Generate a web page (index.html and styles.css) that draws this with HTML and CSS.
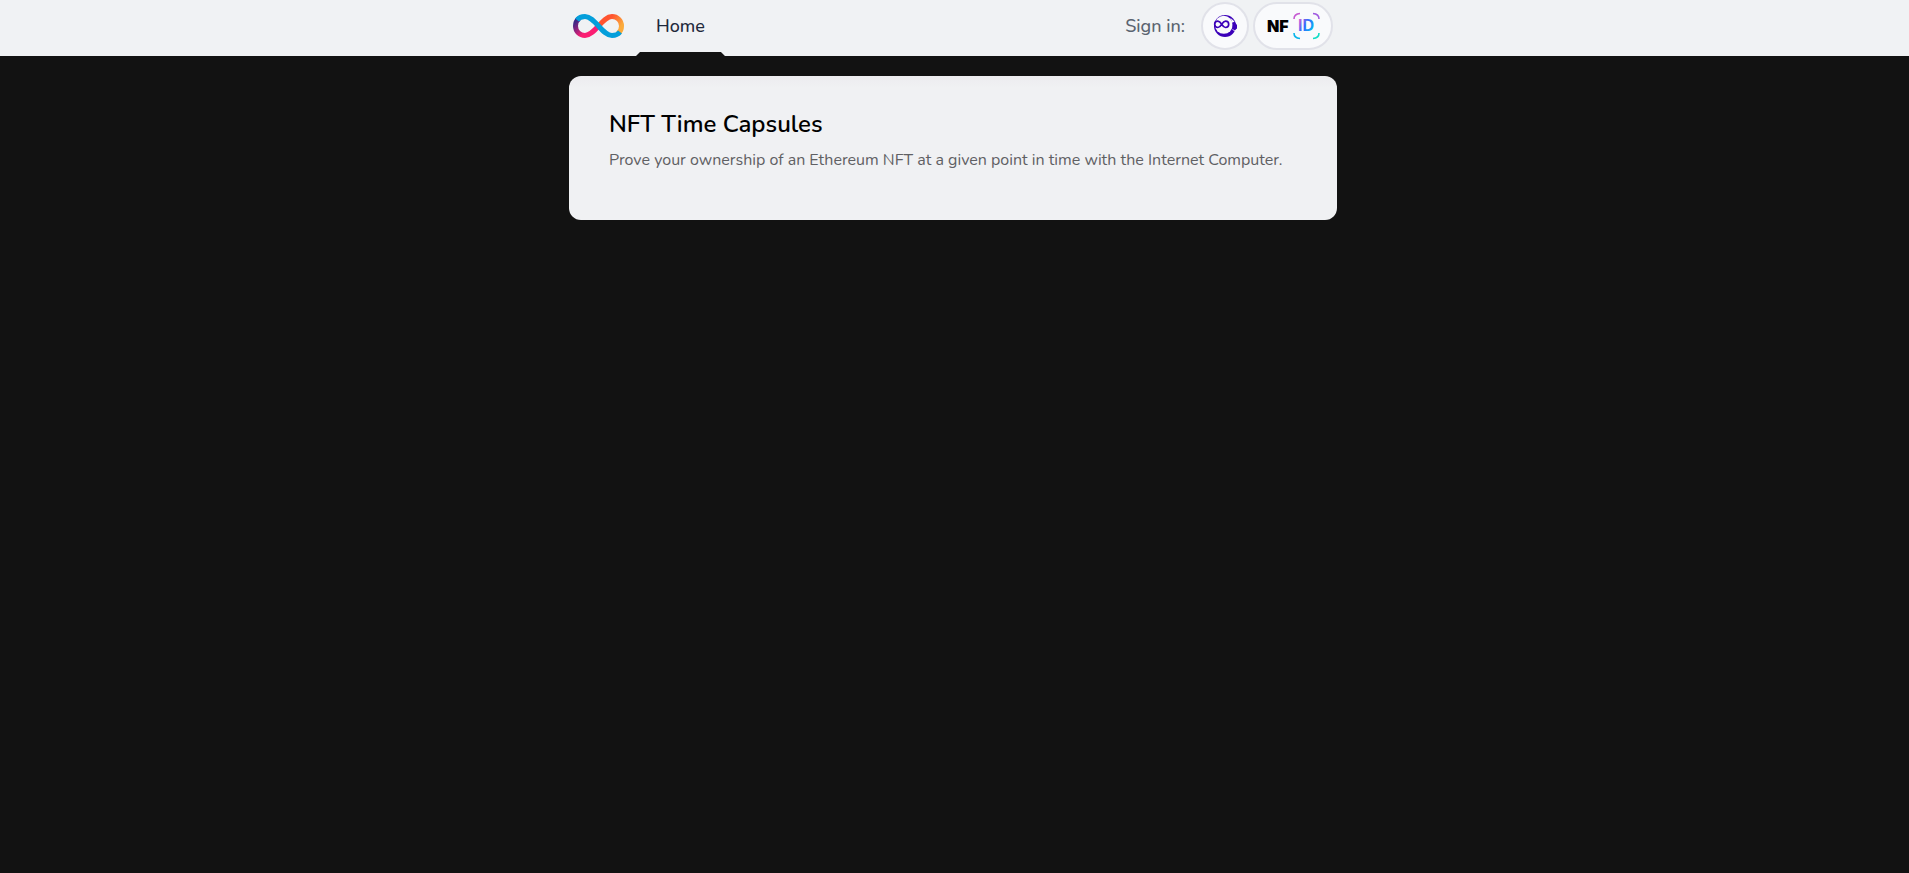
FILE: index.html
```html
<!DOCTYPE html>
<html lang="en">
<head>
<meta charset="utf-8">
<meta name="viewport" content="width=device-width, initial-scale=1">
<title>NFT Time Capsules</title>
<link rel="stylesheet" href="styles.css">
</head>
<body>
<header class="topbar">
  <div class="container topbar-inner">
    <nav class="nav">
      <svg class="logo" viewBox="0 0 51 24" fill="none" stroke-width="5" aria-hidden="true">
        <defs>
          <linearGradient id="warm" x1="29" y1="3" x2="48" y2="18" gradientUnits="userSpaceOnUse">
            <stop offset="0.3" stop-color="#ff5430"/><stop offset="0.85" stop-color="#fbab3b"/>
          </linearGradient>
          <linearGradient id="pink" x1="18" y1="21" x2="3" y2="6" gradientUnits="userSpaceOnUse">
            <stop offset="0.3" stop-color="#fb1e72"/><stop offset="0.95" stop-color="#3f2785"/>
          </linearGradient>
        </defs>
        <path stroke="url(#warm)" d="M25 12.5C30 7 34 2.5 39 2.5C44.300 2.500 48.500 6.700 48.500 12C48.500 15 47 18 45 19.500"/>
        <path stroke="url(#pink)" d="M26 11.500C21 17 17 21.500 12 21.500C6.700 21.500 2.500 17.300 2.500 12C2.500 9 4 6 6 4.500"/>
        <path stroke="#049fdb" d="M4 6C6 3.500 9 2.500 12 2.500C22 2.500 29 21.500 39 21.500C42 21.500 45 20.500 47 18"/>
      </svg>
      <a class="tab" href="#">Home</a>
    </nav>
    <div class="signin">
      <span class="signin-label">Sign in:</span>
      <button class="provider" type="button" aria-label="Internet Identity">
        <svg class="astronaut" viewBox="0 0 24 24" aria-hidden="true">
          <circle cx="12" cy="12" r="11" fill="#3b00b9"/>
          <circle cx="10.800" cy="10.800" r="9" fill="#fafafc"/>
          <path fill="#fafafc" d="M17.500 4l4 3.500-2 1.500z"/>
          <path fill="#3b00b9" d="M19.500 8.500h2.500l2 2.500v3.500l-2 1.500h-2.500z"/>
          <path fill="none" stroke="#fafafc" stroke-width="0.800" d="M19.500 15.500l3 1.800"/>
          <path fill="none" stroke="#3b00b9" stroke-width="1.700" d="M8.700 10.300C7.500 8.300 6.300 7.100 4.900 7.100a3.200 3.200 0 0 0 0 6.400C6.300 13.500 7.500 12.300 8.700 10.300C9.900 8.300 11.100 7.100 12.500 7.100a3.200 3.200 0 0 1 0 6.400C11.100 13.500 9.900 12.300 8.700 10.300z"/>
        </svg>
      </button>
      <button class="provider provider-wide" type="button" aria-label="NFID">
        <svg class="nfid" viewBox="0 0 54 28" aria-hidden="true">
          <defs>
            <linearGradient id="id" x1="32" y1="9" x2="48" y2="19" gradientUnits="userSpaceOnUse">
              <stop offset="0" stop-color="#d45bd4"/><stop offset="0.450" stop-color="#2f6bff"/><stop offset="1" stop-color="#00c8ee"/>
            </linearGradient>
          </defs>
          <text class="nf" x="1" y="20">NF</text>
          <text class="id" x="32" y="19" fill="url(#id)">ID</text>
          <g fill="none" stroke-width="1.600">
            <path stroke="#c65ad2" d="M28 7q0-5 6-5.500"/>
            <path stroke="#a05be0" d="M47 1.500q6 .500 6 5.500"/>
            <path stroke="#08b4ea" d="M28 21q0 5 6 5.500"/>
            <path stroke="#10dcc4" d="M47 26.500q6-.500 6-5.500"/>
          </g>
        </svg>
      </button>
    </div>
  </div>
</header>
<main class="main">
  <section class="container card">
    <h1 class="title">NFT Time Capsules</h1>
    <p class="lead">Prove your ownership of an Ethereum NFT at a given point in time with the Internet Computer.</p>
  </section>
</main>
</body>
</html>
```
FILE: styles.css
```css
* {
  box-sizing: border-box;
}

body {
  margin: 0;
  background: #121212;
  font-family: Nunito, Lato, "Open Sans", sans-serif;
}

.container {
  width: 100%;
  max-width: 768px;
  margin: 0 auto;
}

.topbar {
  padding-right: 3px;
  background: #f0f2f4;
}

.topbar-inner {
  display: flex;
  justify-content: space-between;
  height: 56px;
  padding: 0 4px;
}

.nav {
  display: flex;
  gap: 12px;
}

.logo {
  width: 51px;
  height: 24px;
  margin-top: 14px;
}

.tab {
  position: relative;
  padding: 12px 20px 0;
  color: #1e293b;
  font-size: 18px;
  font-weight: 500;
  line-height: 28px;
  text-decoration: none;
}

.tab::after {
  content: "";
  position: absolute;
  right: 0;
  bottom: 0;
  left: 0;
  height: 4px;
  background: #121212;
  clip-path: polygon(0 100%, 4px 0, calc(100% - 4px) 0, 100% 100%);
}

.signin {
  display: flex;
  align-items: center;
  gap: 4px;
  height: 52px;
}

.signin-label {
  margin-right: 12px;
  color: #5b6470;
  font-size: 18px;
  font-weight: 500;
}

.provider {
  display: flex;
  align-items: center;
  justify-content: center;
  width: 48px;
  height: 48px;
  padding: 0;
  border: 2px solid #e1e2e9;
  border-radius: 24px;
  background: #f9fafc;
  cursor: pointer;
}

.provider-wide {
  width: 80px;
}

.astronaut {
  width: 24px;
  height: 24px;
}

.nfid {
  width: 54px;
  height: 28px;
}

.nf {
  font-family: Inter, sans-serif;
  font-size: 16px;
  font-weight: 900;
}

.id {
  font-family: "Liberation Sans", Arial, sans-serif;
  font-size: 16px;
  font-weight: 700;
}

.main {
  padding: 20px 3px 20px 0;
}

.card {
  padding: 32px 40px 48px;
  border-radius: 12px;
  background: linear-gradient(#ececef, #f0f1f3 12px);
}

.title {
  margin: 0;
  color: #000;
  font-size: 24px;
  font-weight: 600;
  line-height: 32px;
}

.lead {
  margin: 8px 0 0;
  color: #5f6063;
  font-size: 16px;
  line-height: 24px;
}
```
